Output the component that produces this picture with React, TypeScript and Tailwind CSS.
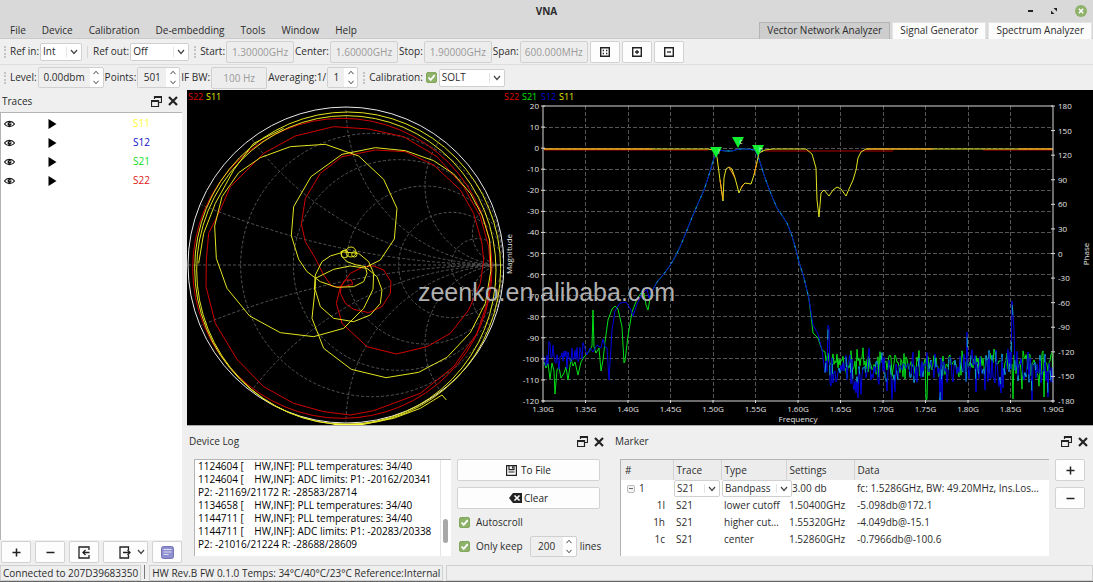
import { useState, type JSX, type ReactNode } from "react";

const X0 = 40;
const X1 = 550;
const Y0 = 16;
const Y1 = 311;

const magTicks = Array.from({ length: 15 }, (_, i) => 20 - i * 10);
const phaseTicks = Array.from({ length: 13 }, (_, i) => 180 - i * 30);
const freqTicks = Array.from({ length: 13 }, (_, i) => 1.3 + i * 0.05);

// small seeded generator so the noise floor is the same on every render
const makeNoise = (seed: number) => {
    let s = seed;
    return () => {
        s = (s * 16807) % 2147483647;
        return s / 2147483647;
    };
};

type Point = [number, number];

const floorNoise = (seed: number, from: number, to: number, mean: number, amp: number, dips: Point[]): Point[] => {
    const rnd = makeNoise(seed);
    const pts: Point[] = [];
    for (let x = from; x <= to; x += 1) {
        const deep = rnd() > 0.93 ? rnd() * amp * 1.2 : 0;
        pts.push([x, mean + (rnd() + rnd() - 1) * amp + deep]);
    }
    dips.forEach(([x, y]) => {
        const i = Math.round(x - from);
        if (pts[i]) { pts[i] = [pts[i][0], y]; }
    });
    return pts.map(([x, y]) => [x, Math.min(y, Y1 - 1)]);
};

const toPoints = (pts: Point[]) => pts.map(([x, y]) => `${x.toFixed(1)},${y.toFixed(1)}`).join(" ");

const passLeft: Point[] = [
    [148, 203], [154, 192], [160, 185], [166, 177], [171, 169], [177, 157], [184, 140], [190, 125], [197, 109], [201, 100],
    [205, 88], [208, 78], [211, 68], [216, 60], [222, 61], [229, 61], [236, 59], [244, 59], [252, 60], [254, 64], [257, 72],
    [262, 88], [268, 104], [274, 118], [284, 133], [289, 146], [293, 160], [296, 172], [301, 188], [306, 209],
];

const s21: Point[] = [
    [41, 272], [43, 278], [45, 273], [47, 289], [49, 273], [51, 281], [52, 304], [54, 280], [56, 277], [58, 288], [61, 283], [63, 277],
    [65, 290], [68, 269], [70, 276], [72, 272], [75, 285], [78, 272], [81, 267], [84, 264], [87, 260], [89, 256], [90, 220],
    [91, 257], [93, 263], [96, 258], [98, 281], [100, 270], [102, 252], [105, 230], [109, 219], [112, 216], [115, 219],
    [119, 237], [121, 273], [122, 271], [125, 246], [129, 222], [134, 209], [138, 203], [141, 203], [143, 215], [145, 220],
    ...passLeft,
    [310, 243], [315, 248], [319, 260],
    ...floorNoise(77, 322, 550, 273, 16, [[325, 263], [423, 310], [424, 309], [510, 309], [541, 307], [482, 288]]),
];

const s12: Point[] = [
    ...floorNoise(913, 41, 80, 267, 17, []),
    [84, 265], [87, 258], [90, 262], [94, 255], [98, 258], [100, 249], [102, 257], [104, 258], [106, 290], [109, 240], [112, 221],
    [117, 213], [123, 212], [127, 218], [130, 226], [134, 214], [139, 204], [144, 199], [146, 208],
    ...passLeft,
    [310, 235], [315, 244], [319, 260],
    ...floorNoise(4021, 322, 550, 278, 23, [
        [325, 235], [326, 238], [328, 296], [330, 293], [355, 308], [384, 301], [437, 310], [439, 310],
        [464, 242], [473, 302], [498, 303], [509, 211], [510, 226], [511, 240], [545, 307],
    ]),
];

const s11: Point[] = [
    [41, 59], [205, 59], [210, 60], [214, 67], [217, 90], [220, 111], [221, 88], [223, 79], [226, 77], [229, 79], [232, 88],
    [236, 103], [239, 96], [242, 93], [248, 94], [251, 85], [254, 72], [256, 63], [262, 60], [270, 59], [303, 59],
    [309, 64], [313, 78], [314, 110], [316, 127], [318, 103], [321, 100], [326, 106], [330, 100], [334, 97], [338, 99],
    [343, 106], [346, 99], [350, 90], [353, 80], [355, 68], [358, 62], [363, 59], [550, 59],
];

const smithYellow = [
    "565,173 655,182 740,212 800,252 850,310 885,375 908,450 912,540 895,640 850,728 780,802 695,847 597,863 493,838 410,775 375,685 385,590 385,565 440,538 490,528 540,535 570,560 585,600 580,640 550,675 500,695 440,685 400,650 385,600",
    "565,173 465,193 372,260 320,350 313,437 335,508 360,545 400,575 450,592 500,590 530,575 540,550 535,530 505,524 480,515 465,500 462,485 480,478",
    "492,190 415,163 310,170 220,203 155,248 105,320 83,408 88,505 120,595 188,678 280,728 380,740 470,715 530,655 558,598 560,550 545,515 515,490 470,486 430,498 405,515 385,555 382,600",
    "492,190 515,198 590,268 630,355 622,447 580,510 540,530",
    "290,115 200,160 140,240 85,340 50,430 35,520",
    "530,1003 620,985 700,955 765,915 778,930",
];

const smithRed = [
    "440,110 325,138 230,190 130,290 95,370 65,430 58,510 57,590 85,700 150,808 230,890 320,940 410,965 490,975 560,962 700,910 800,830 870,730 900,640 912,560 905,470 880,380 830,290 750,200 650,140 545,117 440,110",
    "465,200 400,250 355,325 343,402 355,455 385,505 410,555 435,590 470,590 497,583 493,570 475,570 462,590 460,610 475,640 500,658 545,668 585,650 610,610 612,575 590,540 560,528 530,530 490,550 460,590 448,640 465,700 540,770 628,792 720,770 790,730 845,660 880,580 890,510 885,460 860,370 820,300 740,225 655,185 565,180 465,200",
];

const SmithChart = (): JSX.Element => (
    <svg viewBox="0 0 317 335" className="block h-auto w-full" role="img" aria-label="Smith chart">
        <defs>
            <clipPath id="smith-clip"><circle cx="159" cy="175" r="158" /></clipPath>
        </defs>
        <g clipPath="url(#smith-clip)" fill="none" stroke="#555" strokeWidth="1" strokeDasharray="3 2">
            <path d="M1 175H317" />
            {[1, 2, 3, 4, 5].map((n) => (
                <circle key={n} cx={317 - (158 * n) / 6} cy="175" r={(158 * n) / 6} />
            ))}
            {[0.2, 0.5, 1, 2, 5].map((x) => (
                <g key={x}>
                    <circle cx="317" cy={175 - 158 / x} r={158 / x} />
                    <circle cx="317" cy={175 + 158 / x} r={158 / x} />
                </g>
            ))}
        </g>
        <circle cx="159" cy="175" r="158" fill="none" stroke="#e8e8e8" />
        <g transform="scale(0.33333)" fill="none" strokeWidth="3" strokeLinejoin="round">
            <g stroke="#d00000">
                <ellipse cx="466" cy="535" rx="449" ry="450" />
                {smithRed.map((p) => <polyline key={p} points={p} />)}
            </g>
            <g stroke="#e4e420">
                <ellipse cx="482" cy="535" rx="459" ry="469" />
                <ellipse cx="478" cy="540" rx="449" ry="463" />
                {smithYellow.map((p) => <polyline key={p} points={p} />)}
                <circle cx="492" cy="486" r="15" />
                <circle cx="473" cy="492" r="11" />
                <circle cx="502" cy="493" r="8" />
            </g>
            <path d="M440 1004H530" stroke="#ffff40" strokeWidth="6" />
        </g>
        <text x="1" y="10" fontSize="9" fill="#e00000">S22</text>
        <text x="19" y="10" fontSize="9" fill="#e8e800">S11</text>
    </svg>
);

const markers = [
    { x: 213, y: 57, name: "l" },
    { x: 235, y: 47, name: "c" },
    { x: 255, y: 55, name: "h" },
];

const MagnitudeChart = (): JSX.Element => (
    <svg viewBox="1 0 589 335" className="block h-auto w-full" role="img" aria-label="Magnitude over frequency">
        <g stroke="#555" strokeDasharray="4 2" shapeRendering="crispEdges">
            {magTicks.slice(1, -1).map((v, i) => {
                const y = Y0 + ((i + 1) * (Y1 - Y0)) / 14;
                return <path key={v} d={`M${X0} ${y}H${X1}`} />;
            })}
            {freqTicks.slice(1, -1).map((f, i) => {
                const x = X0 + ((i + 1) * (X1 - X0)) / 12;
                return <path key={f} d={`M${x} ${Y0}V${Y1}`} />;
            })}
        </g>
        <g fontSize="8" fill="#e4e4e4">
            {magTicks.map((v, i) => (
                <text key={v} x="36" y={Y0 + 3 + (i * (Y1 - Y0)) / 14} textAnchor="end">{v}</text>
            ))}
            {phaseTicks.map((v, i) => (
                <text key={v} x="555" y={Y0 + 3 + (i * (Y1 - Y0)) / 12}>{v}</text>
            ))}
            {freqTicks.map((f, i) => (
                <text key={f} x={X0 + (i * (X1 - X0)) / 12} y="322" textAnchor="middle">{f.toFixed(2)}G</text>
            ))}
            <text x="295" y="332" textAnchor="middle">Frequency</text>
            <text transform="translate(9 164) rotate(-90)" textAnchor="middle">Magnitude</text>
            <text transform="translate(586 164) rotate(-90)" textAnchor="middle">Phase</text>
        </g>
        <g fill="none" strokeWidth="1" strokeLinejoin="round">
            <polyline points={toPoints(s21)} stroke="#00e018" />
            <polyline points={toPoints(s12)} stroke="#0000e0" />
            <polyline points={toPoints(passLeft)} stroke="#10a8b8" strokeDasharray="2 10" />
            <polyline points={toPoints(s12.slice(-229))} stroke="#10a8b8" strokeDasharray="10 45" />
            <path d="M41 60H205 M262 61H390 M480 60H550" stroke="#b00000" />
            <polyline points={toPoints(s11)} stroke="#e4e420" />
            <path d="M41 59H149 M363 59H430 M516 59H550" stroke="#ff9c1c" />
            <path d="M217 90L220 109 M226 77L232 88 M251 85L254 72 M238 98L241 94" stroke="#ff9c1c" />
        </g>
        <path d={`M${X0} ${Y0}H${X1}V${Y1}H${X0}Z`} fill="none" stroke="#d8d8d8" />
        <g stroke="#d8d8d8">
            {magTicks.map((v, i) => {
                const y = Y0 + (i * (Y1 - Y0)) / 14;
                return <path key={v} d={`M${X0 - 2} ${y}h4`} />;
            })}
            {phaseTicks.map((v, i) => {
                const y = Y0 + (i * (Y1 - Y0)) / 12;
                return <path key={v} d={`M${X1 - 2} ${y}h4`} />;
            })}
            {freqTicks.map((f, i) => {
                const x = X0 + (i * (X1 - X0)) / 12;
                return <path key={f} d={`M${x} ${Y1 - 1}v3`} />;
            })}
        </g>
        {markers.map((m) => (
            <g key={m.name}>
                <path d={`M${m.x - 6} ${m.y}h12l-6 11z`} fill="#10f030" />
                <text x={m.x + 3} y={m.y + 7} fontSize="7" fill="#d8ffd8" textAnchor="middle">{m.name}</text>
            </g>
        ))}
        <g fontSize="9">
            <text x="1" y="10" fill="#e00000">S22</text>
            <text x="19" y="10" fill="#00e800">S21</text>
            <text x="38" y="10" fill="#0000d0">S12</text>
            <text x="56" y="10" fill="#e8e800">S11</text>
        </g>
    </svg>
);

const Chevron = ({ className = "" }: { className?: string }): JSX.Element => (
    <svg viewBox="0 0 8 6" className={`w-[8px] ${className}`} fill="none" stroke="#444" strokeWidth="1.2">
        <path d="M1 1l3 3.500L7 1" />
    </svg>
);

const FloatIcon = (): JSX.Element => (
    <svg viewBox="0 0 11 11" className="h-[11px] w-[11px]" fill="none" stroke="#222">
        <path d="M3.500 3V.5h7v6H8" strokeWidth="1.200" />
        <path d="M3 1h8" strokeWidth="2" />
        <path d="M.5 4.500h7v6h-7z" strokeWidth="1.200" />
        <path d="M0 5h8" strokeWidth="2" />
    </svg>
);

const CloseIcon = (): JSX.Element => (
    <svg viewBox="0 0 10 10" className="h-[10px] w-[10px]" fill="none" stroke="#222" strokeWidth="2.2">
        <path d="M1 1l8 8M9 1l-8 8" />
    </svg>
);

const DockHeader = ({ title, className }: { title: string; className: string }): JSX.Element => (
    <div className={`flex items-center justify-between ${className}`}>
        <h2>{title}</h2>
        <div className="flex items-center gap-[6px]">
            <button aria-label={`Float ${title}`}><FloatIcon /></button>
            <button aria-label={`Close ${title}`}><CloseIcon /></button>
        </div>
    </div>
);

const Handle = (): JSX.Element => (
    <span className="mr-[3px] ml-1 h-3 w-[2px] border-l-2 border-dotted border-[#c4c4c4]" />
);

interface PickProps {
    id: string;
    label: string;
    options: string[];
    className: string;
    hideLabel?: boolean;
}

const Pick = ({ id, label, options, className, hideLabel }: PickProps): JSX.Element => (
    <>
        {!hideLabel && <label htmlFor={id} className="whitespace-nowrap">{label}</label>}
        <span className={`relative block shrink-0 ${className}`}>
            <select
                id={id}
                aria-label={label}
                className="block h-full w-full appearance-none rounded-xs border border-[#d0d0d0] bg-white pl-[2px] leading-[13px] outline-none"
            >
                {options.map((o) => <option key={o}>{o}</option>)}
            </select>
            <span className="pointer-events-none absolute inset-y-1 right-[15px] w-px bg-[#e4e4e4]" />
            <Chevron className="pointer-events-none absolute top-1/2 right-1 h-[6px] -translate-y-1/2" />
        </span>
    </>
);

const Field = ({ id, label, initial, className }: { id: string; label: string; initial: string; className: string }): JSX.Element => (
    <>
        <label htmlFor={id} className="whitespace-nowrap">{label}</label>
        <input
            id={id}
            disabled
            defaultValue={initial}
            className={`h-[22px] rounded-xs border border-[#d0d0d0] bg-[#ededed] text-center text-[#9a9a9a] ${className}`}
        />
    </>
);

const Spin = ({ id, label, initial, className, hideLabel }: { id: string; label: string; initial: string; className: string; hideLabel?: boolean }): JSX.Element => {
    const [value, setValue] = useState(initial);
    const step = (by: number) => setValue((v) => (v.includes(".") ? `${(parseFloat(v) + by).toFixed(2)}dbm` : String(Number(v) + by)));

    return (
        <>
            {!hideLabel && <label htmlFor={id} className="whitespace-nowrap">{label}</label>}
            <span className={`flex h-[21px] shrink-0 overflow-hidden rounded-xs border border-[#d0d0d0] bg-white ${className}`}>
                <input
                    id={id}
                    aria-label={label}
                    value={value}
                    onChange={(e) => setValue(e.target.value)}
                    className="w-0 min-w-0 grow bg-[#efefef] text-center outline-none"
                />
                <span className="flex w-[13px] flex-col items-center justify-between py-[2px]">
                    <button aria-label={`${label} up`} onClick={() => step(1)}><Chevron className="block h-[5px] rotate-180" /></button>
                    <button aria-label={`${label} down`} onClick={() => step(-1)}><Chevron className="block h-[5px]" /></button>
                </span>
            </span>
        </>
    );
};

const Tick = ({ id, label, className = "gap-[6px]" }: { id: string; label: string; className?: string }): JSX.Element => {
    const [on, setOn] = useState(true);
    return (
        <label htmlFor={id} className={`flex items-center whitespace-nowrap ${className}`}>
            <span className="relative block h-[11px] w-[11px]">
                <input
                    id={id}
                    type="checkbox"
                    checked={on}
                    onChange={() => setOn(!on)}
                    className="block h-[11px] w-[11px] appearance-none rounded-xs border border-[#82a65c] bg-white checked:bg-[#8fb26a]"
                />
                {on && (
                    <svg viewBox="0 0 11 11" className="pointer-events-none absolute inset-0" fill="none" stroke="#fff" strokeWidth="1.8">
                        <path d="M2.500 5.500l2.200 2.300L8.700 3.200" />
                    </svg>
                )}
            </span>
            <span>{label}</span>
        </label>
    );
};

const PushButton = ({ label, className = "", children }: { label: string; className?: string; children: ReactNode }): JSX.Element => (
    <button
        aria-label={label}
        className={`flex h-[22px] items-center justify-center rounded-xs border border-[#d2d2d2] bg-[#fdfdfd] text-[#222] ${className}`}
    >
        {children}
    </button>
);

const SpanIcon = ({ d }: { d: string }): JSX.Element => (
    <svg viewBox="0 0 10 10" className="h-[10px] w-[10px]" fill="none" stroke="#222">
        <path d="M.7.7h8.600v8.600H.7z" strokeWidth="1.4" />
        <path d={d} strokeWidth="1.3" />
    </svg>
);

const SignIcon = ({ plus }: { plus?: boolean }): JSX.Element => (
    <svg viewBox="0 0 9 9" className="h-[9px] w-[9px]" stroke="#222" strokeWidth="1.5">
        <path d={plus ? "M.5 4.500h8M4.500.5v8" : "M.5 4.500h8"} />
    </svg>
);

const traces = [
    { name: "S11", color: "text-[#ffff30]" },
    { name: "S12", color: "text-[#1010c8]" },
    { name: "S21", color: "text-[#10e020]" },
    { name: "S22", color: "text-[#e01818]" },
];

const TracesDock = (): JSX.Element => (
    <aside className="flex w-[187px] shrink-0 flex-col">
        <DockHeader title="Traces" className="h-[22px] pr-[9px] pl-[2px]" />
        <ul className="mr-[5px] grow border-t border-l border-[#b4b4b4] bg-white pt-px">
            {traces.map((t) => (
                <li key={t.name} className="flex h-[19px] items-center pl-[3px]">
                    <button aria-label={`Hide ${t.name}`} className="w-11">
                        <svg viewBox="0 0 12 8" className="h-2 w-[11px]">
                            <path d="M.5 4C3 .2 9 .2 11.500 4 9 7.800 3 7.800.5 4z" fill="none" stroke="#111" strokeWidth="1.200" />
                            <circle cx="6" cy="4" r="2.200" fill="#111" />
                            <circle cx="6.500" cy="3.500" r=".7" fill="#fff" />
                        </svg>
                    </button>
                    <button aria-label={`Pause ${t.name}`}>
                        <svg viewBox="0 0 9 10" className="h-[10px] w-[9px]"><path d="M.5 0v10L8.500 5z" fill="#000" /></svg>
                    </button>
                    <span className={`ml-[76px] ${t.color}`}>{t.name}</span>
                </li>
            ))}
        </ul>
        <div className="flex gap-1 py-px pr-[5px] pl-px">
            <PushButton label="Add trace" className="w-[30px]"><SignIcon plus /></PushButton>
            <PushButton label="Remove trace" className="w-[30px]"><SignIcon /></PushButton>
            <PushButton label="Import" className="w-[30px]">
                <svg viewBox="0 0 12 13" className="h-[13px] w-3" fill="none" stroke="#222" strokeWidth="1.300">
                    <path d="M11 4V1H1v11h10V9M11.500 6.500H5M7.500 4L5 6.500 7.500 9" />
                </svg>
            </PushButton>
            <PushButton label="Export" className="grow gap-[6px] pl-3">
                <svg viewBox="0 0 12 13" className="h-[13px] w-3" fill="none" stroke="#222" strokeWidth="1.300">
                    <path d="M9.500 4V1H1v11h8.500V9M4 6.500h7M8.500 4L11 6.500 8.500 9" />
                </svg>
                <Chevron className="h-[6px]" />
            </PushButton>
            <PushButton label="Memory" className="w-[30px]">
                <svg viewBox="0 0 13 13" className="h-[13px] w-[13px]">
                    <rect x=".5" y=".5" width="12" height="12" rx="2" fill="#8f8fcf" stroke="#7474b4" />
                    <path d="M2.500 3.500h8M2.500 6h8M2.500 8.500h5" stroke="#dcdcf4" />
                </svg>
            </PushButton>
        </div>
    </aside>
);

const logText = `1124604 [    HW,INF]: PLL temperatures: 34/40
1124604 [    HW,INF]: ADC limits: P1: -20162/20341
P2: -21169/21172 R: -28583/28714
1134658 [    HW,INF]: PLL temperatures: 34/40
1144711 [    HW,INF]: PLL temperatures: 34/40
1144711 [    HW,INF]: ADC limits: P1: -20283/20338
P2: -21016/21224 R: -28688/28609`;

const DeviceLog = (): JSX.Element => (
    <section className="flex flex-[420] flex-col">
        <DockHeader title="Device Log" className="h-[33px] pr-[3px] pb-[2px] pl-[2px]" />
        <div className="flex gap-[6px] pr-[7px] pl-[7px]">
            <div className="flex h-[97px] grow border-t border-l border-[#b4b4b4] bg-white">
                <textarea
                    readOnly
                    aria-label="Device log"
                    defaultValue={logText}
                    className="grow resize-none overflow-hidden pl-[3px] leading-[13px] whitespace-pre text-black outline-none"
                />
                <div className="w-[11px] border-l border-[#e4e4e4] pt-[59px] pl-[2px]">
                    <div className="h-6 w-[5px] rounded-full bg-[#a8a8a8]" />
                </div>
            </div>
            <div className="flex w-[143px] shrink-0 flex-col">
                <PushButton label="To File" className="gap-1">
                    <svg viewBox="0 0 11 11" className="h-[11px] w-[11px]" fill="none" stroke="#222" strokeWidth="1.200">
                        <path d="M.6.6h9.800v9.800H.6zM3 .6v4h5v-4M6.500 1.500v2M2.500 7h6" />
                    </svg>
                    To File
                </PushButton>
                <PushButton label="Clear" className="mt-[6px] gap-[2px]">
                    <svg viewBox="0 0 13 10" className="h-[10px] w-[13px]">
                        <path d="M0 5l4-5h9v10H4z" fill="#222" />
                        <path d="M5.500 2.500l5 5M10.500 2.500l-5 5" stroke="#fff" strokeWidth="1.600" />
                    </svg>
                    Clear
                </PushButton>
                <Tick id="autoscroll" label="Autoscroll" className="mt-[6px] ml-[2px] gap-[6px]" />
                <div className="mt-[6px] flex items-center gap-[3px]">
                    <Tick id="only-keep" label="Only keep" className="mr-1 ml-[2px] gap-[6px]" />
                    <Spin id="keep" label="Lines kept" hideLabel initial="200" className="w-[47px]" />
                    <span>lines</span>
                </div>
            </div>
        </div>
    </section>
);

const markerRows = [
    { id: "1l", type: "lower cutoff", settings: "1.50400GHz", data: "-5.098db@172.1" },
    { id: "1h", type: "higher cut…", settings: "1.55320GHz", data: "-4.049db@-15.1" },
    { id: "1c", type: "center", settings: "1.52860GHz", data: "-0.7966db@-100.6" },
];

const MarkerDock = (): JSX.Element => (
    <section className="flex flex-[486] flex-col">
        <DockHeader title="Marker" className="h-[33px] pr-[5px] pb-[2px] pl-2" />
        <div className="flex gap-[6px] pr-2 pl-[13px]">
            <div className="h-[97px] grow border-t border-l border-[#b4b4b4] bg-white">
                <table className="w-full table-fixed border-collapse text-left">
                    <thead>
                        <tr className="h-[20px] bg-[#ececec]">
                            <th className="w-[52px] border-r border-[#d4d4d4] pl-1 font-normal">#</th>
                            <th className="w-[48px] border-r border-[#d4d4d4] pl-[3px] font-normal">Trace</th>
                            <th className="w-[65px] border-r border-[#d4d4d4] pl-[3px] font-normal">Type</th>
                            <th className="w-[68px] border-r border-[#d4d4d4] pl-[3px] font-normal">Settings</th>
                            <th className="pl-[3px] font-normal">Data</th>
                        </tr>
                    </thead>
                    <tbody>
                        <tr className="h-[17px]">
                            <td>
                                <span className="flex items-center gap-1 pl-[6px]">
                                    <button aria-label="Collapse marker 1" className="flex h-2 w-2 items-center justify-center rounded-xs border border-[#bbb] bg-[#f4f4f4]">
                                        <span className="h-px w-1 bg-[#666]" />
                                    </button>
                                    1
                                </span>
                            </td>
                            <td className="pl-px"><Pick id="m-trace" label="Marker trace" hideLabel options={["S21", "S12"]} className="h-[17px] w-[46px]" /></td>
                            <td className="pl-px"><Pick id="m-type" label="Marker type" hideLabel options={["Bandpass", "Lowpass"]} className="z-10 h-[17px] w-[70px]" /></td>
                            <td className="pl-[6px]">3.00 db</td>
                            <td className="pl-[3px] whitespace-nowrap">fc: 1.5286GHz, BW: 49.20MHz, Ins.Los…</td>
                        </tr>
                        {markerRows.map((r) => (
                            <tr key={r.id} className="h-[17px]">
                                <td className="pr-2 text-right">{r.id}</td>
                                <td className="pl-[3px]">S21</td>
                                <td className="pl-[3px] whitespace-nowrap">{r.type}</td>
                                <td className="pl-[3px]">{r.settings}</td>
                                <td className="pl-[3px]">{r.data}</td>
                            </tr>
                        ))}
                    </tbody>
                </table>
            </div>
            <div className="flex w-[30px] shrink-0 flex-col gap-[6px]">
                <PushButton label="Add marker"><SignIcon plus /></PushButton>
                <PushButton label="Remove marker"><SignIcon /></PushButton>
            </div>
        </div>
    </section>
);

const menus = ["File", "Device", "Calibration", "De-embedding", "Tools", "Window", "Help"];
const modes = ["Vector Network Analyzer", "Signal Generator", "Spectrum Analyzer"];

const App = (): JSX.Element => {
    const [mode, setMode] = useState(modes[0]);

    return (
        <div className="relative flex min-h-screen w-full flex-col overflow-hidden bg-[#efefef] font-['Open_Sans','Noto_Sans',sans-serif] text-[10px] leading-[15px] text-[#2c2c2c]">
            <header className="border-b border-[#cacaca] bg-[#d9d9d9]">
                <div className="grid h-[22px] grid-cols-3 items-center">
                    <h1 className="col-start-2 text-center font-bold">VNA</h1>
                    <div className="flex items-center justify-end gap-[18px] pr-[6px]">
                        <button aria-label="Minimize" className="h-[2px] w-[5px] bg-[#222]" />
                        <button aria-label="Restore">
                            <svg viewBox="0 0 6 6" className="h-[6px] w-[6px]" fill="#222"><path d="M2.500 0H6v3.500zM0 2.500V6h3.500z" /></svg>
                        </button>
                        <button aria-label="Close" className="flex h-[12px] w-[12px] items-center justify-center rounded-full bg-[#8fb26a]">
                            <svg viewBox="0 0 6 6" className="h-[6px] w-[6px]" stroke="#fff" strokeWidth="1.500"><path d="M.8.8l4.400 4.400M5.200.8L.8 5.200" /></svg>
                        </button>
                    </div>
                </div>
                <div className="flex h-[16px] items-center justify-between">
                    <nav className="flex gap-4 pl-[10px]">
                        {menus.map((m) => <button key={m}>{m}</button>)}
                    </nav>
                    <div className="flex gap-[2px] pr-px">
                        {modes.map((m) => (
                            <button
                                key={m}
                                onClick={() => setMode(m)}
                                className={`h-[17px] border border-b-0 px-[7px] leading-[15px] ${m === mode ? "border-[#b4b4b4] bg-[#cdcdcd]" : "border-[#e4e4e4] bg-[#fcfcfc]"}`}
                            >
                                {m}
                            </button>
                        ))}
                    </div>
                </div>
            </header>

            <div className="flex h-[26px] items-center gap-px border-b border-[#dedede]">
                <Handle />
                <Pick id="ref-in" label="Ref in:" options={["Int", "Ext"]} className="h-[18px] w-[42px]" />
                <span className="mx-1 h-3 w-px bg-[#d8d8d8]" />
                <Pick id="ref-out" label="Ref out:" options={["Off", "10 MHz"]} className="h-[18px] w-[59px]" />
                <Handle />
                <Field id="start" label="Start:" initial="1.30000GHz" className="w-[68px]" />
                <Field id="center" label="Center:" initial="1.60000GHz" className="w-[68px]" />
                <Field id="stop" label="Stop:" initial="1.90000GHz" className="w-[68px]" />
                <Field id="span" label="Span:" initial="600.000MHz" className="w-[68px]" />
                <div className="flex gap-[2px] pl-px">
                    <PushButton label="Full span" className="w-[30px]"><SpanIcon d="M2.700 3.500h1.300M6 3.500h1.300M2.700 6.500h1.300M6 6.500h1.300" /></PushButton>
                    <PushButton label="Zoom in" className="w-[30px]"><SpanIcon d="M3 5h4M5 3v4" /></PushButton>
                    <PushButton label="Zoom out" className="w-[30px]"><SpanIcon d="M3 5h4" /></PushButton>
                </div>
            </div>

            <div className="flex h-[25px] items-center gap-px">
                <Handle />
                <Spin id="level" label="Level:" initial="0.00dbm" className="w-[66px]" />
                <Spin id="points" label="Points:" initial="501" className="w-[43px]" />
                <Field id="ifbw" label="IF BW:" initial="100 Hz" className="w-[56px]" />
                <Spin id="avg" label="Averaging:1/" initial="1" className="w-[31px]" />
                <Handle />
                <div className="flex items-center gap-[2px]">
                    <Tick id="cal-on" label="Calibration:" className="flex-row-reverse gap-[3px]" />
                    <Pick id="cal-type" label="Calibration type" hideLabel options={["SOLT", "TRL"]} className="h-[18px] w-[66px]" />
                </div>
            </div>

            <main className="flex grow">
                <TracesDock />
                <div className="flex min-w-0 grow flex-col">
                    <div className="flex border-b border-[#a8a8a8] bg-black">
                        <div className="flex-[317]"><SmithChart /></div>
                        <div className="flex-[589]"><MagnitudeChart /></div>
                    </div>
                    <div className="flex">
                        <DeviceLog />
                        <MarkerDock />
                    </div>
                </div>
            </main>

            <footer className="flex h-[18px] items-start gap-[3px] border-b border-[#666] pt-px">
                <span className="border border-[#d0d0d0] px-[2px] leading-[14px] whitespace-nowrap">Connected to 207D39683350</span>
                <span className="mr-px h-[14px] w-px bg-[#777]" />
                <span className="border border-[#d0d0d0] px-[2px] leading-[14px] whitespace-nowrap">HW Rev.B FW 0.1.0 Temps: 34°C/40°C/23°C Reference:Internal</span>
                <span className="h-4 grow border border-[#d0d0d0]" />
            </footer>

            <span className="pointer-events-none absolute inset-x-0 top-[276px] text-center font-['Liberation_Sans',sans-serif] text-[25px] leading-8 text-[#b0b0b0]">
                zeenko.en.alibaba.com
            </span>
        </div>
    );
};

export default App;
